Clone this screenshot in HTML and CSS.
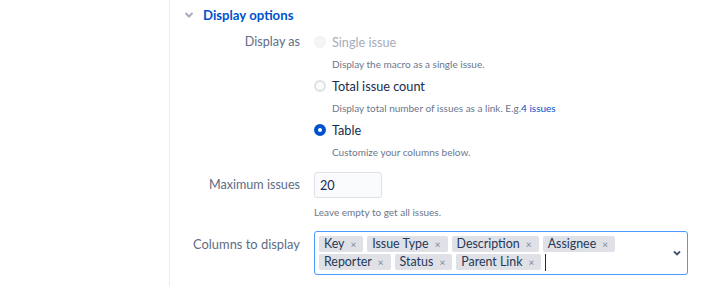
FILE: index.html
```html
<!DOCTYPE html>
<html lang="en">
<head>
    <meta charset="UTF-8">
    <title>Display options</title>
    <link rel="stylesheet" href="styles.css">
</head>
<body>
    <div class="panel">
        <div class="section-title">
            <svg class="chev" width="10" height="8" viewBox="0 0 10 8"><path d="M1.5 2 L5 5.5 L8.5 2" fill="none" stroke="#a5adba" stroke-width="2"/></svg>
            <span>Display options</span>
        </div>

        <div class="row row-display">
            <div class="label">Display as</div>
            <div class="field">
                <div class="radio-item disabled">
                    <span class="radio"></span>
                    <span class="radio-text">Single issue</span>
                </div>
                <div class="hint hint-radio">Display the macro as a single issue.</div>
                <div class="radio-item">
                    <span class="radio"></span>
                    <span class="radio-text">Total issue count</span>
                </div>
                <div class="hint hint-radio">Display total number of issues as a link. E.g.<a href="#">4 issues</a></div>
                <div class="radio-item">
                    <span class="radio checked"></span>
                    <span class="radio-text">Table</span>
                </div>
                <div class="hint hint-radio">Customize your columns below.</div>
            </div>
        </div>

        <div class="row row-max">
            <div class="label">Maximum issues</div>
            <div class="field">
                <div class="text-input">20</div>
                <div class="hint hint-max">Leave empty to get all issues.</div>
            </div>
        </div>

        <div class="row row-cols">
            <div class="label">Columns to display</div>
            <div class="field">
                <div class="multi">
                    <div class="tags">
                        <span class="tag">Key <i>×</i></span>
                        <span class="tag">Issue Type <i>×</i></span>
                        <span class="tag">Description <i>×</i></span>
                        <span class="tag">Assignee <i>×</i></span>
                        <span class="tag">Reporter <i>×</i></span>
                        <span class="tag">Status <i>×</i></span>
                        <span class="tag">Parent Link <i>×</i></span>
                        <span class="caret"></span>
                    </div>
                    <svg class="drop" width="10" height="8" viewBox="0 0 10 8"><path d="M2 2.5 L5 5.5 L8 2.5" fill="none" stroke="#42526e" stroke-width="1.8"/></svg>
                </div>
            </div>
        </div>
    </div>
</body>
</html>
```

FILE: styles.css
```css
*
{
    box-sizing: border-box;
}

body
{
    margin: 0;
    background-color: white;
    font-family: Lato, sans-serif;
    color: #172b4d;
    overflow: hidden;
}

.panel
{
    margin-left: 169px;
    border-left: 1px solid #ebecf0;
    height: 286px;
    padding-top: 5px;
}

.section-title
{
    display: flex;
    align-items: center;
    height: 20px;
    padding-left: 14px;
    font-size: 13.2px;
    font-weight: bold;
    color: #0052cc;
}

.chev
{
    margin-right: 9px;
}

.row
{
    display: flex;
}

.label
{
    width: 144px;
    flex-shrink: 0;
    text-align: right;
    white-space: nowrap;
    font-size: 12.6px;
    color: #5e6c84;
    padding-right: 14px;
    line-height: 20px;
}

.row-cols .label
{
    font-size: 12.9px;
    padding-top: 3px;
}

.field
{
    flex: 1;
}

.row-display
{
    margin-top: 7px;
}

.radio-item
{
    display: flex;
    align-items: center;
    height: 20px;
    font-size: 12.7px;
}

.radio
{
    width: 12px;
    height: 12px;
    border-radius: 50%;
    border: 2px solid #dfe1e6;
    background-color: #fafbfc;
    margin-right: 6px;
}

.disabled .radio
{
    border-color: #f1f2f4;
    background-color: #f4f5f7;
}

.disabled .radio-text
{
    color: #a5adba;
}

.radio.checked
{
    border: 4px solid #0052cc;
    background-color: white;
}

.hint
{
    font-size: 10px;
    color: #6b778c;
    line-height: 14px;
}

.hint-radio
{
    padding-left: 18px;
    margin-top: 5px;
    margin-bottom: 5px;
}

.hint a
{
    color: #0052cc;
    text-decoration: none;
}

.row-max
{
    margin-top: 8px;
}

.row-max .label
{
    padding-top: 3px;
}

.text-input
{
    width: 68px;
    height: 26px;
    border: 1px solid #dfe1e6;
    border-radius: 3px;
    background-color: #fafbfc;
    font-size: 12.7px;
    padding: 4px 5px;
    line-height: 16px;
}

.hint-max
{
    margin-top: 7px;
}

.row-cols
{
    margin-top: 12px;
}

.multi
{
    width: 374px;
    height: 44px;
    border: 1px solid #4c9aff;
    border-radius: 3px;
    display: flex;
    align-items: center;
    padding: 4px 5px 4px 4px;
}

.tags
{
    flex: 1;
    display: flex;
    flex-wrap: wrap;
    gap: 2px 4px;
    align-items: center;
}

.tag
{
    background-color: #dfe1e6;
    border-radius: 2px;
    font-size: 12.4px;
    height: 16px;
    line-height: 16px;
    padding: 0 7px 0 5px;
    color: #253858;
}

.tag i
{
    font-style: normal;
    color: #7a869a;
    font-size: 10px;
    margin-left: 3px;
}

.caret
{
    width: 1px;
    height: 17px;
    background-color: #172b4d;
}
```
